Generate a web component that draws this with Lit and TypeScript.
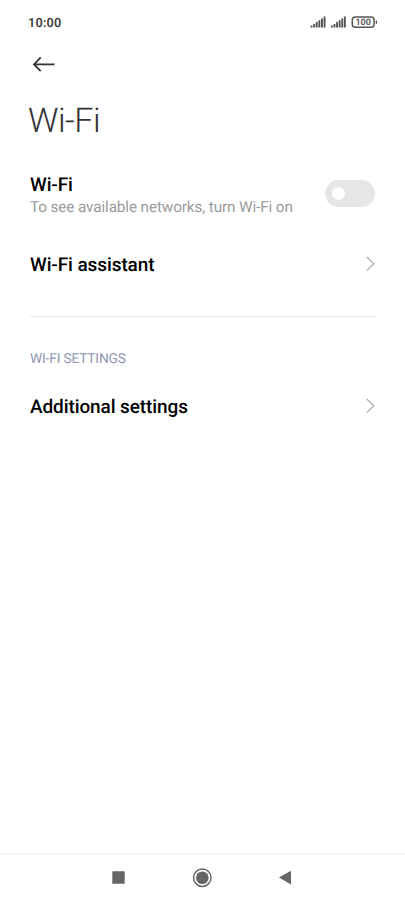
import { LitElement, html, css, svg } from "lit";

class AppRoot extends LitElement {
  static styles = css`
    :host { display: flex; flex-direction: column; width: 405px; height: 902px; background: #fff; font-family: Roboto, sans-serif; color: #000; overflow: hidden; text-rendering: geometricPrecision; }
    * { box-sizing: border-box; }
    svg { display: block; }
    .status { height: 44px; flex: none; display: flex; justify-content: space-between; padding: 14px 27px 0 28px; }
    .clock { font-weight: 600; font-size: 12.7px; line-height: 20px; letter-spacing: 0.2px; color: #404040; }
    .level { font-size: 9px; font-weight: 600; fill: #555; }
    .nav { height: 41px; flex: none; padding: 9px 0 0 30px; }
    h1 { margin: 0; height: 80px; flex: none; padding: 15px 0 0 28px; font-size: 34px; line-height: 42px; font-weight: 300; letter-spacing: -0.5px; color: #333; }
    .row { display: flex; justify-content: space-between; padding: 0 30px; flex: none; }
    .wifi { height: 79px; padding-top: 7px; }
    .title { font-size: 19px; line-height: 26px; font-weight: 500; letter-spacing: -0.1px; }
    .sub { font-size: 15.3px; line-height: 18px; letter-spacing: -0.12px; color: #9b9b9b; }
    .switch { width: 50px; height: 27px; margin-top: 8px; border-radius: 14px; background: #e6e6e6; padding: 7px; }
    .knob { width: 13px; height: 13px; border-radius: 50%; background: #fff; }
    .link { height: 40px; padding-top: 8px; }
    .rule { height: 1px; margin: 32px 29px 0 30px; background: #e6e6e6; flex: none; }
    .section { margin: 32px 30px 0; font-size: 13.8px; line-height: 20px; letter-spacing: -0.2px; color: #9096b4; height: 37px; flex: none; }
    .spacer { flex: 1; }
    .bottom { height: 49px; flex: none; border-top: 1px solid #f0f0f0; display: flex; justify-content: space-between; padding: 14px 110px 0 108px; }
  `;
  chevron() {
    return html`<svg width="10" height="24" viewBox="0 0 10 24"><path d="M1.8 5L8.8 11.8L1.8 18.6" fill="none" stroke="#aaa" stroke-width="1.2"/></svg>`;
  }
  bars(x: number) {
    return [2, 3.6, 5.4, 7.2, 9, 11].map((h, i) => svg`<rect x=${x + i * 2.6} y=${13.5 - h} width="1.9" height=${h} fill="#555"/>`);
  }
  render() {
    return html`
      <div class="status">
        <span class="clock">10:00</span>
        <svg width="68" height="16" viewBox="0 0 68 16">
          ${this.bars(0.6)}${this.bars(20.9)}
          <rect x="42.3" y="3" width="21.8" height="10.2" rx="3" fill="none" stroke="#555" stroke-width="1.5"/>
          <path d="M66.4 6.5V9.8" stroke="#555" stroke-width="1.3"/>
          <text class="level" x="53.2" y="11.4" text-anchor="middle" textLength="15.6">100</text>
        </svg>
      </div>
      <div class="nav"><svg width="26" height="22" viewBox="0 0 26 22"><path d="M24.5 11.4H4M10.7 4.4L4 11.4L10.7 18.2" fill="none" stroke="#333" stroke-width="1.8"/></svg></div>
      <h1>Wi-Fi</h1>
      <div class="row wifi"><div><div class="title">Wi-Fi</div><div class="sub">To see available networks, turn Wi-Fi on</div></div><div class="switch"><div class="knob"></div></div></div>
      <div class="row link"><div class="title">Wi-Fi assistant</div>${this.chevron()}</div>
      <div class="rule"></div>
      <div class="section">WI-FI SETTINGS</div>
      <div class="row link"><div class="title">Additional settings</div>${this.chevron()}</div>
      <div class="spacer"></div>
      <div class="bottom">
        <svg width="20" height="20" viewBox="0 0 20 20"><rect x="4.3" y="3.2" width="12.4" height="12.6" rx=".5" fill="#666"/></svg>
        <svg width="20" height="20" viewBox="0 0 20 20"><circle cx="10.3" cy="9.7" r="8.7" fill="none" stroke="#666" stroke-width="1.5"/><circle cx="10.3" cy="9.7" r="6.3" fill="#666"/></svg>
        <svg width="20" height="20" viewBox="0 0 20 20"><path d="M16 2.8V16.4L4 9.6Z" fill="#666"/></svg>
      </div>`;
  }
}
customElements.define("app-root", AppRoot);
